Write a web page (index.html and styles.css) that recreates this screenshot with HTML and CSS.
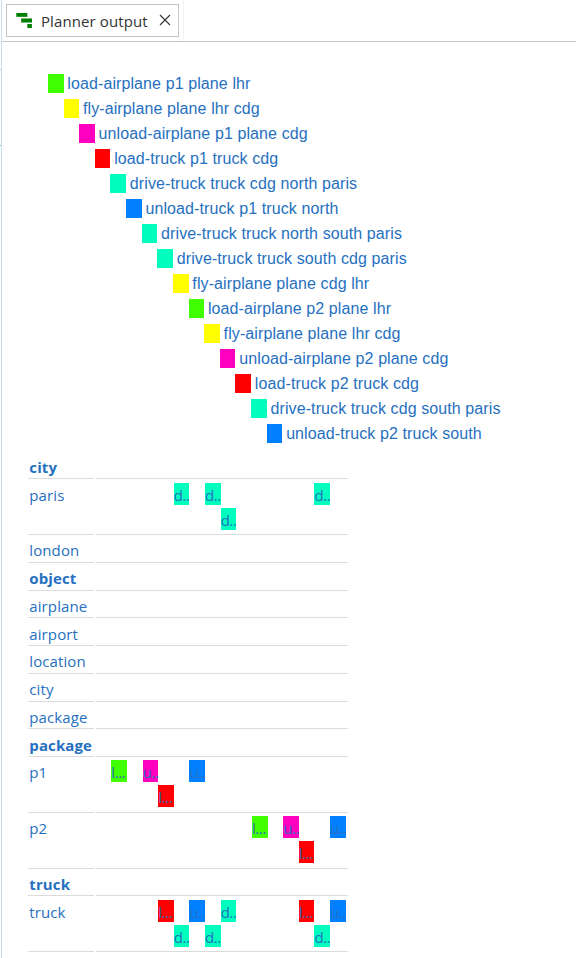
FILE: index.html
```html
<!DOCTYPE html>
<html lang="en">
<head>
<meta charset="utf-8">
<title>Planner output</title>
<link rel="stylesheet" href="styles.css">
</head>
<body>
<div class="gutter"><i class="tick"></i><i class="tick blue"></i></div>
<div class="panel">
<header class="tabs">
<div class="tab">
<svg class="icon" width="17" height="16" viewBox="0 0 17 16"><path d="M0 0h12v4H0zM5 5h11v5H5zM11 11h5v4h-5z" fill="#a4cba4"/><path d="M.5 0H11v3.8H.5zM5.3 5.7H16v3.6H5.3zM11.5 11h4.3v4h-4.3z" fill="#008000"/></svg>
<span class="title">Planner output</span>
<svg class="close" width="12" height="12" viewBox="0 0 12 12"><path d="M1 1l10 10M11 1L1 11" stroke="#333" stroke-width="1.1" fill="none"/></svg>
</div>
</header>
<main>
<section class="plan">
<div class="step" style="--i:0"><b class="la"></b><span>load-airplane p1 plane lhr</span></div>
<div class="step" style="--i:1"><b class="fa"></b><span>fly-airplane plane lhr cdg</span></div>
<div class="step" style="--i:2"><b class="ua"></b><span>unload-airplane p1 plane cdg</span></div>
<div class="step" style="--i:3"><b class="lt"></b><span>load-truck p1 truck cdg</span></div>
<div class="step" style="--i:4"><b class="dt"></b><span>drive-truck truck cdg north paris</span></div>
<div class="step" style="--i:5"><b class="ut"></b><span>unload-truck p1 truck north</span></div>
<div class="step" style="--i:6"><b class="dt"></b><span>drive-truck truck north south paris</span></div>
<div class="step" style="--i:7"><b class="dt"></b><span>drive-truck truck south cdg paris</span></div>
<div class="step" style="--i:8"><b class="fa"></b><span>fly-airplane plane cdg lhr</span></div>
<div class="step" style="--i:9"><b class="la"></b><span>load-airplane p2 plane lhr</span></div>
<div class="step" style="--i:10"><b class="fa"></b><span>fly-airplane plane lhr cdg</span></div>
<div class="step" style="--i:11"><b class="ua"></b><span>unload-airplane p2 plane cdg</span></div>
<div class="step" style="--i:12"><b class="lt"></b><span>load-truck p2 truck cdg</span></div>
<div class="step" style="--i:13"><b class="dt"></b><span>drive-truck truck cdg south paris</span></div>
<div class="step" style="--i:14"><b class="ut"></b><span>unload-truck p2 truck south</span></div>
</section>
<section class="objects">
<div class="row"><div class="name type">city</div><div class="lane"></div></div>
<div class="row tall"><div class="name">paris</div><div class="lane">
<span class="bar dt" style="--c:5">d..</span><span class="bar dt" style="--c:7">d..</span><span class="bar dt" style="--c:14">d..</span><span class="bar dt low" style="--c:8">d..</span></div></div>
<div class="row"><div class="name">london</div><div class="lane"></div></div>
<div class="row"><div class="name type">object</div><div class="lane"></div></div>
<div class="row"><div class="name">airplane</div><div class="lane"></div></div>
<div class="row"><div class="name">airport</div><div class="lane"></div></div>
<div class="row"><div class="name">location</div><div class="lane"></div></div>
<div class="row"><div class="name">city</div><div class="lane"></div></div>
<div class="row"><div class="name">package</div><div class="lane"></div></div>
<div class="row"><div class="name type">package</div><div class="lane"></div></div>
<div class="row tall"><div class="name">p1</div><div class="lane">
<span class="bar la" style="--c:1">l...</span><span class="bar ua" style="--c:3">u..</span><span class="bar ut" style="--c:6">u..</span><span class="bar lt low" style="--c:4">l...</span></div></div>
<div class="row tall"><div class="name">p2</div><div class="lane">
<span class="bar la" style="--c:10">l...</span><span class="bar ua" style="--c:12">u..</span><span class="bar ut" style="--c:15">u..</span><span class="bar lt low" style="--c:13">l...</span></div></div>
<div class="row"><div class="name type">truck</div><div class="lane"></div></div>
<div class="row tall"><div class="name">truck</div><div class="lane">
<span class="bar lt" style="--c:4">l...</span><span class="bar ut" style="--c:6">u..</span><span class="bar dt" style="--c:8">d..</span><span class="bar lt" style="--c:13">l...</span><span class="bar ut" style="--c:15">u..</span><span class="bar dt low" style="--c:5">d..</span><span class="bar dt low" style="--c:7">d..</span><span class="bar dt low" style="--c:14">d..</span></div></div>
</section>
</main>
</div>
</body>
</html>
```
FILE: styles.css
```css
* { box-sizing: border-box; }
body {
  margin: 0;
  height: 958px;
  display: flex;
  overflow: hidden;
  background: #fff;
  color: #2670bf;
  font: 15px/22px "Open Sans", "Noto Sans", sans-serif;
  --step: 15.64px;
}
.gutter { width: 1px; display: flex; flex-direction: column; padding-top: 69px; gap: 75px; }
.tick { height: 1px; background: #ccc; }
.tick.blue { background: #7fc4de; }
.panel { flex: 1; border-left: 1px solid #c5dfeb; }
.tabs {
  height: 42px;
  padding: 4px 0 0 4px;
  border-bottom: 1px solid #c8c8c8;
  background: linear-gradient(#f3f3f3, #f3f3f3) 181px 0 / 1px 100% no-repeat;
}
.tab {
  width: 173px;
  height: 33px;
  display: flex;
  align-items: center;
  padding-left: 9px;
  border: 1px solid #c3c3c3;
  color: #333;
}
.icon { flex: none; margin-right: 8px; }
.title { width: 118px; white-space: nowrap; letter-spacing: 0.1px; }
.close { flex: none; margin-top: -2px; }
.plan { --step: 15.63px; padding: 32px 0 0 45.9px; height: 409.6px; }
.step {
  height: 25px;
  padding-left: calc(var(--i) * var(--step));
  display: flex;
  gap: 3.8px;
  font: 16px/19px "Liberation Sans", Arial, sans-serif;
  letter-spacing: 0.1px;
  white-space: nowrap;
}
.step b { width: var(--step); height: 19px; }
.objects { padding-left: 26px; }
.row { height: 27.75px; display: grid; grid-template-columns: 66px 252px; grid-template-rows: 100%; column-gap: 2px; }
.row.tall { height: 55.75px; }
.name { padding: 4.4px 0 0 1.3px; border-bottom: 1px solid #dcdcdc; white-space: nowrap; letter-spacing: 0.1px; }
.type { font-weight: 700; letter-spacing: 0.12px; }
.lane { border-bottom: 1px solid #dcdcdc; }
.tall .lane {
  padding-top: 3.25px;
  display: grid;
  grid-template-columns: 15.3px repeat(15, var(--step));
  grid-template-rows: 22px 22px;
  row-gap: 3px;
}
.bar { grid-row: 1; grid-column: calc(var(--c) + 1); white-space: nowrap; line-height: 25px; letter-spacing: -0.4px; }
.bar.low { grid-row: 2; }
.la { background: #40ff00; }
.fa { background: #ffff00; }
.ua { background: #ff00bf; }
.lt { background: #ff0000; }
.dt { background: #00ffbf; }
.ut { background: #0080ff; }
```
